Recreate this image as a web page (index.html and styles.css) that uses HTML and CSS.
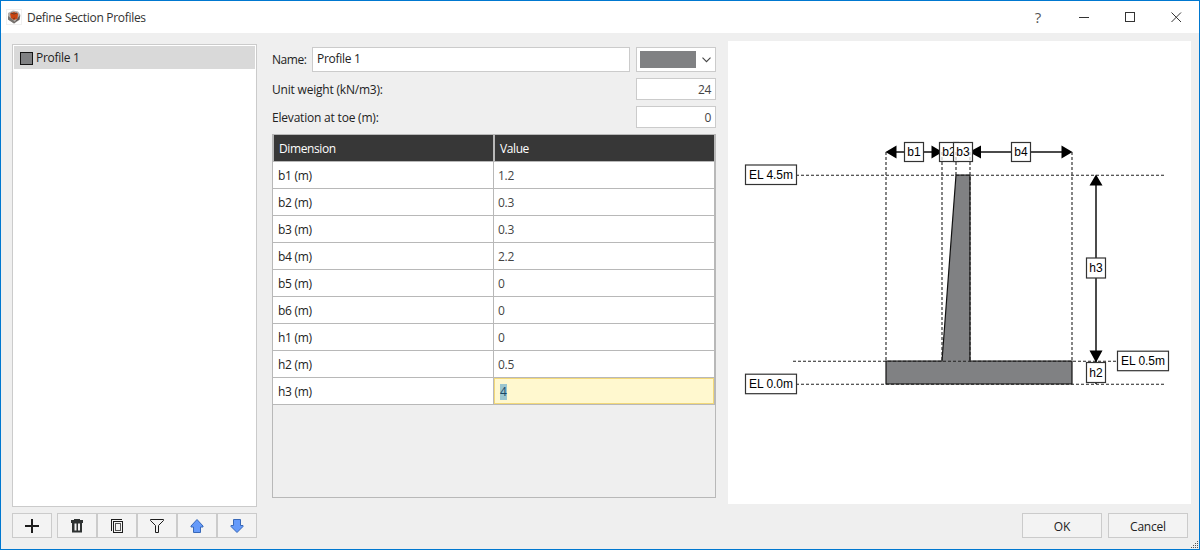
FILE: index.html
```html
<!DOCTYPE html>
<html lang="en">
<head>
<meta charset="utf-8">
<title>Define Section Profiles</title>
<link rel="stylesheet" href="styles.css">
</head>
<body>
<div class="window">
  <header class="titlebar">
    <svg class="app-icon" width="16" height="16" viewBox="0 0 16 16">
      <rect x=".5" y=".5" width="15" height="15" fill="#fff" stroke="#f0f0f0"/>
      <path d="M2 4 7 1.500l5 1L14.500 6l-1 5L8 14.500l-6-4z" fill="#b3afac"/>
      <path d="M2 7v3.500l6 4 1.500-1-4-4z" fill="#77736f"/>
      <path d="M8 14l5.500-3.500L14 6l-3 4z" fill="#5e5856"/>
      <path d="M4 4.500l4-1.500 4 1.500-.5 5L8 11l-3-2z" fill="#c9440f"/>
      <path d="M5 4l3 1 3-1M7 10l2-1" fill="none" stroke="#6d3a24"/>
    </svg>
    <span class="title">Define Section Profiles</span>
    <span class="help">?</span>
    <svg class="controls" width="138" height="32" viewBox="0 0 138 32" fill="none" stroke="#333">
      <path d="M18 16.500h10" shape-rendering="crispEdges"/>
      <rect x="64.500" y="11.500" width="9" height="9" shape-rendering="crispEdges"/>
      <path d="M110.500 11.500l9.500 9.500M120 11.500l-9.500 9.500"/>
    </svg>
  </header>
  <main class="content">
    <section class="sidebar">
      <div class="list"><div class="item"><i class="swatch"></i><span>Profile 1</span></div></div>
      <div class="tools">
        <button class="tool add"><svg width="16" height="16" viewBox="0 0 16 16"><path d="M1 7h6V1h2v6h6v2H9v6H7V9H1z" fill="#1c1c1c"/></svg></button>
        <button class="tool"><svg width="16" height="16" viewBox="0 0 16 16"><path fill="#2e3232" fill-rule="evenodd" d="M5 1h6v1h3v3h-1v9.500H3V5H2V2h3zM5.500 5.500v7h2v-7zm3.500 0v7h2v-7z"/></svg></button>
        <button class="tool"><svg width="16" height="16" viewBox="0 0 16 16" fill="none" stroke="#1c1c1c" shape-rendering="crispEdges"><path d="M2.500 13V1.500H13"/><path d="M4.500 3.500h9v11h-9z"/><path d="M6.500 5.500h5v7h-5z" stroke="#555"/></svg></button>
        <button class="tool"><svg width="16" height="16" viewBox="0 0 16 16" fill="none" stroke="#1c1c1c"><path d="M1.500 1.500h13v1L9.500 7.500v7h-3v-7l-5-5z"/></svg></button>
        <button class="tool"><svg width="16" height="16" viewBox="0 0 16 16"><path d="M8 1.500 14 8v1h-2.500v5.500h-7V9H2V8z" fill="#659afa" stroke="#3868b8"/></svg></button>
        <button class="tool"><svg width="16" height="16" viewBox="0 0 16 16"><path d="M8 14.500 14 8.500v-1h-2.500v-6h-7v6H2v1z" fill="#659afa" stroke="#3868b8"/></svg></button>
      </div>
    </section>
    <section class="editor">
      <div class="row name-row">
        <label class="label-name">Name:</label>
        <div class="field name">Profile 1</div>
        <div class="field combo"><i></i><svg width="9" height="6" viewBox="0 0 9 6"><path d="M.5.700l4 4 4-4" fill="none" stroke="#444" stroke-width="1.100"/></svg></div>
      </div>
      <div class="row"><label class="label-long">Unit weight (kN/m3):</label><div class="field number">24</div></div>
      <div class="row"><label class="label-long">Elevation at toe (m):</label><div class="field number">0</div></div>
      <div class="table">
        <div class="tr head"><span>Dimension</span><span>Value</span></div>
        <div class="tr"><span>b1 (m)</span><span>1.2</span></div>
        <div class="tr"><span>b2 (m)</span><span>0.3</span></div>
        <div class="tr"><span>b3 (m)</span><span>0.3</span></div>
        <div class="tr"><span>b4 (m)</span><span>2.2</span></div>
        <div class="tr"><span>b5 (m)</span><span>0</span></div>
        <div class="tr"><span>b6 (m)</span><span>0</span></div>
        <div class="tr"><span>h1 (m)</span><span>0</span></div>
        <div class="tr"><span>h2 (m)</span><span>0.5</span></div>
        <div class="tr"><span>h3 (m)</span><span class="editing"><mark>4</mark></span></div>
      </div>
    </section>
    <section class="preview">
      <svg class="diagram" width="463" height="463" viewBox="728 41 463 463">
        <path class="shape" d="M956 175h14v186h102v23H886v-23h56z"/>
        <g class="dash">
          <path d="M796 175.200h369M793 361.200h324M796 384.200h369"/>
          <path d="M886 152v209M942 152v209M956 152v23M970 152v209M1072 152v209"/>
        </g>
        <g class="dim">
          <path d="M892 152h46M976 152h90M1096 182v173M1096 361v23"/>
        </g>
        <g class="arrow">
          <path d="M885.500 152l11-6.500v13zM942.500 152l-11-6.500v13zM969 152l12-6.500v13zM1072.500 152l-11-6.500v13zM1096 174.500l-6.500 11h13zM1096 362.500l-6.500-12h13z"/>
        </g>
        <g class="tag">
          <rect x="904.500" y="142.500" width="19" height="19"/><text x="914" y="156">b1</text>
          <rect x="939.500" y="142.500" width="19" height="19"/><text x="949" y="156">b2</text>
          <rect x="953.500" y="142.500" width="19" height="19"/><text x="963" y="156">b3</text>
          <rect x="1011.500" y="142.500" width="19" height="19"/><text x="1021" y="156">b4</text>
          <rect x="1086.500" y="258" width="19" height="20"/><text x="1096" y="272">h3</text>
          <rect x="1086.500" y="362.500" width="19" height="20"/><text x="1096" y="377">h2</text>
          <rect x="745.500" y="165" width="51" height="19.500"/><text x="771" y="179" textLength="44">EL 4.5m</text>
          <rect x="745.500" y="374.200" width="51" height="19.500"/><text x="771" y="388" textLength="44">EL 0.0m</text>
          <rect x="1117.500" y="351.200" width="51" height="19.500"/><text x="1143" y="365" textLength="44">EL 0.5m</text>
        </g>
        <path class="faint" d="M942 152v10M956 152v10M970 152v10"/>
      </svg>
      <div class="actions"><button class="btn">OK</button><button class="btn">Cancel</button></div>
    </section>
  </main>
  <svg class="grip" width="8" height="8" viewBox="0 0 8 8" fill="#555"><path d="M6 0h1v1H6zM4 2h1v1H4zM6 2h1v1H6zM2 4h1v1H2zM4 4h1v1H4zM6 4h1v1H6zM0 6h1v1H0zM2 6h1v1H2zM4 6h1v1H4zM6 6h1v1H6z"/></svg>
</div>
</body>
</html>
```
FILE: styles.css
```css
* { box-sizing: border-box; }
body { margin: 0; font: 12px/16px "Open Sans", sans-serif; color: #222; }
.window { position: relative; width: 1200px; height: 550px; border: 1px solid #0078d0; background: #efefef; }
.titlebar { height: 32px; background: #fff; display: flex; align-items: center; padding-left: 5px; }
.title { margin-left: 5px; flex: 1; padding-top: 2px; letter-spacing: -.3px; color: #333; }
.help { width: 46px; text-align: center; font-size: 15px; color: #555; }
.controls { display: block; }
.content { display: flex; padding: 8px 8px 0 11px; height: 516px; }
button { padding: 0; font: inherit; color: inherit; border: 1px solid #cbcbcb; background: #f3f3f3; border-radius: 0; }
.sidebar { width: 245px; padding-top: 3px; }
.list { height: 463px; border: 1px solid #cbcbcb; background: #fff; padding: 1px; }
.item { height: 23px; background: #d9d9d9; display: flex; align-items: center; padding-left: 6px; gap: 3px; letter-spacing: -.3px; }
.swatch { width: 13px; height: 13px; background: #808183; border: 1px solid #151515; margin-top: 1px; }
.tools { display: flex; margin-top: 6px; }
.tool { width: 40px; height: 25px; display: flex; align-items: center; justify-content: center; }
.add { margin-right: 5px; }
.editor { width: 444px; margin-left: 15px; padding-top: 6px; }
.row { display: flex; align-items: center; justify-content: space-between; height: 22px; margin-bottom: 6px; letter-spacing: -.3px; }
.row label { padding-top: 1px; }
.row .label-long { letter-spacing: -.2px; padding-top: 2px; }
.name-row { height: 25px; justify-content: flex-start; }
.label-name { width: 40px; letter-spacing: -.45px; }
.field { border: 1px solid #cbcbcb; background: #fff; height: 100%; }
.name { width: 318px; margin-right: 6px; padding: 3px 4px; }
.combo { width: 80px; display: flex; align-items: center; padding: 0 4px 0 3px; justify-content: space-between; }
.combo i { width: 56px; height: 17px; background: #808183; }
.number { width: 80px; text-align: right; padding: 3px 4px; color: #444; }
.table { height: 364px; border: 1px solid #b8b8b8; }
.tr { display: flex; height: 27px; border-bottom: 1px solid #b8b8b8; border-right: 1px solid #b8b8b8; background: #fff; letter-spacing: -.3px; }
.tr span { flex: 0 0 220px; padding: 6px 4px 4px; color: #444; }
.tr span:first-child { flex-basis: 221px; border-right: 1px solid #b8b8b8; padding-left: 5px; color: #222; }
.tr.head { letter-spacing: -.4px; }
.tr.head span { background: #373737; color: #fff; border-left: 1px solid #b8b8b8; padding-left: 5px; }
.tr .editing { background: #fff8cf; border: 1px solid #f2d879; padding: 5px 5px 4px; }
mark { display: block; width: 7px; height: 16px; line-height: 16px; background: #9bc6cf; color: #174866; }
.preview { width: 463px; margin-left: 12px; }
.diagram { display: block; background: #fff; font: 12px "Liberation Sans", sans-serif; }
.shape { fill: #808183; stroke: #111; stroke-width: 1.200; }
.dash { stroke: #222; stroke-width: 1.100; stroke-dasharray: 3 2; fill: none; }
.dim { stroke: #111; stroke-width: 1.500; }
.tag rect { fill: #fff; stroke: #333; stroke-width: 1.200; }
.tag text { text-anchor: middle; fill: #000; }
.faint { stroke: #777; stroke-dasharray: 3 2; opacity: .5; }
.actions { display: flex; justify-content: flex-end; gap: 6px; margin-top: 9px; padding-right: 3px; }
.btn { width: 80px; height: 25px; padding-top: 2px; letter-spacing: -.2px; }
.grip { position: absolute; right: 0; bottom: 0; }
```
